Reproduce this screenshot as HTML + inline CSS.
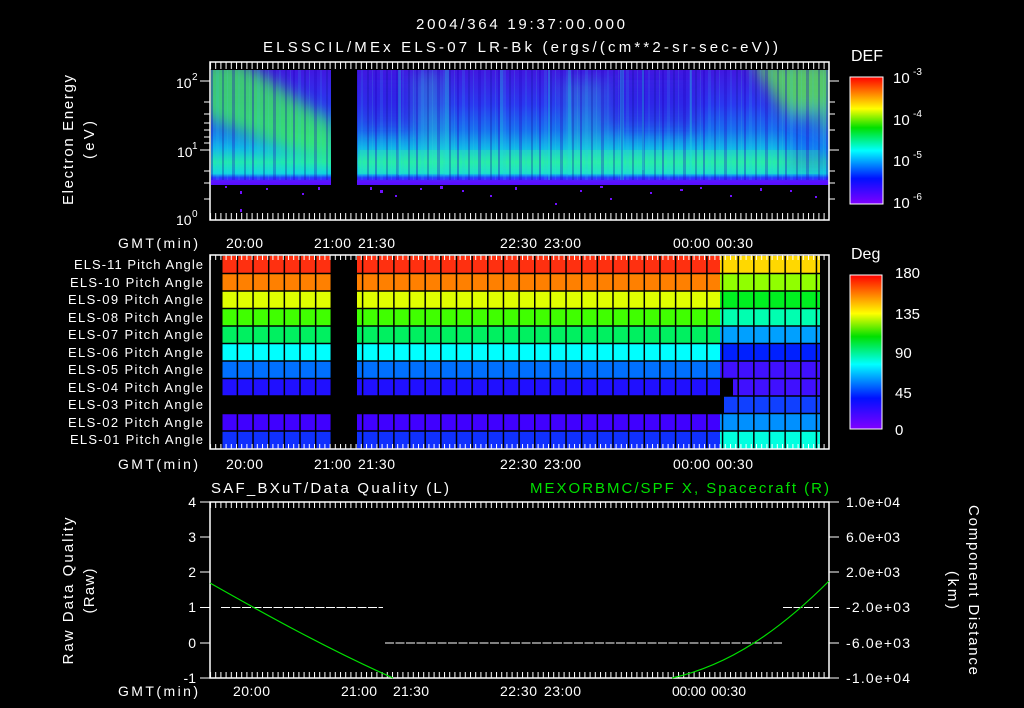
<!DOCTYPE html>
<html><head><meta charset="utf-8"><style>
html,body{margin:0;padding:0;background:#000;}
svg{display:block}
text{font-family:"Liberation Sans",sans-serif;fill:#fff}
</style></head><body>
<svg width="1024" height="708" viewBox="0 0 1024 708" xmlns="http://www.w3.org/2000/svg">
<defs>
<linearGradient id="rb" x1="0" y1="1" x2="0" y2="0">
<stop offset="0" stop-color="#8000ff"/><stop offset="0.2" stop-color="#0010ff"/><stop offset="0.42" stop-color="#00ffff"/><stop offset="0.6" stop-color="#00e000"/><stop offset="0.75" stop-color="#ffff00"/><stop offset="1" stop-color="#ff0000"/>
</linearGradient>
<linearGradient id="spec" x1="0" y1="70" x2="0" y2="185" gradientUnits="userSpaceOnUse">
<stop offset="0" stop-color="#4018e0"/><stop offset="0.3" stop-color="#2a38f0"/><stop offset="0.52" stop-color="#1870f0"/><stop offset="0.68" stop-color="#10b8e8"/><stop offset="0.8" stop-color="#20e8b0"/><stop offset="0.9" stop-color="#10d8e0"/><stop offset="0.935" stop-color="#2040ff"/><stop offset="0.97" stop-color="#6010ff"/><stop offset="1" stop-color="#5010ff"/>
</linearGradient>
<filter id="bl" x="-20%" y="-20%" width="140%" height="140%"><feGaussianBlur stdDeviation="8"/></filter>
<pattern id="str" x="211" y="0" width="41" height="200" patternUnits="userSpaceOnUse">
<rect x="0" y="0" width="2" height="200" fill="#2000c0" opacity="0.35"/>
<rect x="5" y="0" width="3" height="200" fill="#30c0f0" opacity="0.15"/>
<rect x="11" y="0" width="2" height="200" fill="#1010a0" opacity="0.3"/>
<rect x="16" y="0" width="1" height="200" fill="#40d0e0" opacity="0.15"/>
<rect x="21" y="0" width="3" height="200" fill="#2000c0" opacity="0.3"/>
<rect x="27" y="0" width="2" height="200" fill="#30c0f0" opacity="0.12"/>
<rect x="33" y="0" width="2" height="200" fill="#1010a0" opacity="0.3"/>
<rect x="38" y="0" width="1" height="200" fill="#50d0d0" opacity="0.15"/>
</pattern>
<pattern id="grid" x="221" y="0" width="15.65" height="708" patternUnits="userSpaceOnUse">
<rect x="0" y="0" width="1.5" height="708" fill="#000"/>
</pattern>
<pattern id="tk" x="210" y="0" width="5.2" height="10" patternUnits="userSpaceOnUse">
<rect x="0" y="0" width="1" height="10" fill="#fff"/>
</pattern>
<clipPath id="tc"><rect x="211" y="70" width="618" height="115"/></clipPath>
</defs>

<!-- titles -->
<text x="416" y="29" font-size="15" textLength="209">2004/364 19:37:00.000</text>
<text x="263" y="52" font-size="15" textLength="515">ELSSCIL/MEx ELS-07 LR-Bk  (ergs/(cm**2-sr-sec-eV))</text>

<!-- TOP PANEL -->
<g clip-path="url(#tc)">
<rect x="211" y="70" width="618" height="115" fill="url(#spec)"/>
<g filter="url(#bl)" opacity="0.75">
<polygon points="200,60 240,60 335,125 335,160 290,150 200,115" fill="#40ff50"/>
<polygon points="750,60 840,60 840,135 790,120" fill="#60ff40"/>
<polygon points="420,70 440,70 450,170 425,170" fill="#30f0c0" opacity="0.4"/>
<polygon points="560,80 600,80 610,170 570,170" fill="#30f0c0" opacity="0.3"/>
<polygon points="790,110 829,110 829,170 790,170" fill="#1030ff" opacity="0.6"/>
<polygon points="360,80 420,80 420,130 360,130" fill="#3010e0" opacity="0.6"/>
<polygon points="600,80 700,80 700,130 600,130" fill="#3010e0" opacity="0.6"/>
</g>
<rect x="360" y="150" width="460" height="24" fill="#40ff90" opacity="0.25"/>
<rect x="211" y="70" width="618" height="110" fill="url(#str)"/>
<g fill="#20e0e0" opacity="0.3">
<rect x="398" y="70" width="3" height="105"/><rect x="445" y="70" width="4" height="105"/>
<rect x="500" y="70" width="3" height="100"/><rect x="548" y="70" width="2" height="110"/><rect x="568" y="70" width="3" height="105"/>
<rect x="620" y="70" width="4" height="110"/><rect x="642" y="70" width="2" height="100"/><rect x="690" y="70" width="2" height="100"/>
</g>
</g>
<rect x="331" y="66" width="26" height="152" fill="#000"/>
<g fill="#7010ff">
<rect x="225" y="186" width="2" height="2"/><rect x="240" y="191" width="2" height="3"/><rect x="266" y="188" width="2" height="2"/><rect x="302" y="193" width="2" height="2"/><rect x="318" y="187" width="2" height="3"/><rect x="240" y="209" width="2" height="3"/>
<rect x="370" y="187" width="2" height="3"/><rect x="395" y="195" width="2" height="2"/><rect x="420" y="188" width="2" height="2"/><rect x="462" y="190" width="2" height="2"/><rect x="490" y="195" width="2" height="2"/>
<rect x="515" y="187" width="2" height="3"/><rect x="555" y="203" width="2" height="2"/><rect x="580" y="190" width="2" height="2"/><rect x="610" y="198" width="2" height="2"/><rect x="650" y="192" width="2" height="2"/>
<rect x="700" y="187" width="2" height="2"/><rect x="730" y="195" width="2" height="2"/><rect x="760" y="188" width="2" height="3"/><rect x="790" y="190" width="2" height="2"/><rect x="815" y="196" width="2" height="2"/>
<rect x="380" y="190" width="3" height="3"/><rect x="440" y="186" width="3" height="3"/><rect x="600" y="186" width="3" height="2"/><rect x="680" y="189" width="3" height="2"/>
</g>
<rect x="210" y="62" width="619" height="158" fill="none" stroke="#fff" stroke-width="1.5"/>
<rect x="210" y="62" width="619" height="7" fill="url(#tk)"/>
<rect x="210" y="213" width="619" height="7" fill="url(#tk)"/>
<g stroke="#fff" stroke-width="1">
<line x1="200" y1="81" x2="210" y2="81"/><line x1="200" y1="150" x2="210" y2="150"/>
<line x1="204" y1="102" x2="210" y2="102"/><line x1="204" y1="114" x2="210" y2="114"/><line x1="204" y1="123" x2="210" y2="123"/><line x1="204" y1="130" x2="210" y2="130"/><line x1="204" y1="137" x2="210" y2="137"/><line x1="204" y1="143" x2="210" y2="143"/>
<line x1="204" y1="171" x2="210" y2="171"/><line x1="204" y1="183" x2="210" y2="183"/><line x1="204" y1="199" x2="210" y2="199"/>
<line x1="829" y1="81" x2="839" y2="81"/><line x1="829" y1="150" x2="839" y2="150"/>
<line x1="829" y1="102" x2="835" y2="102"/><line x1="829" y1="114" x2="835" y2="114"/><line x1="829" y1="130" x2="835" y2="130"/><line x1="829" y1="171" x2="835" y2="171"/><line x1="829" y1="183" x2="835" y2="183"/><line x1="829" y1="199" x2="835" y2="199"/>
</g>
<text x="176" y="88" font-size="14">10</text><text x="192" y="80" font-size="10">2</text>
<text x="177" y="157" font-size="14">10</text><text x="192" y="149" font-size="10">1</text>
<text x="176" y="225" font-size="14">10</text><text x="192" y="217" font-size="10">0</text>
<text transform="translate(73,140) rotate(-90)" font-size="15" text-anchor="middle" textLength="130">Electron Energy</text>
<text transform="translate(94,140) rotate(-90)" font-size="15" text-anchor="middle" textLength="38">(eV)</text>

<!-- time labels -->
<g font-size="14">
<text x="118" y="248" textLength="80">GMT(min)</text>
<text x="226" y="248" textLength="37">20:00</text><text x="314" y="248" textLength="37">21:00</text><text x="358" y="248" textLength="37">21:30</text><text x="500" y="248" textLength="37">22:30</text><text x="544" y="248" textLength="37">23:00</text><text x="673" y="248" textLength="37">00:00</text><text x="716" y="248" textLength="37">00:30</text>
<text x="118" y="469" textLength="80">GMT(min)</text>
<text x="226" y="469" textLength="37">20:00</text><text x="314" y="469" textLength="37">21:00</text><text x="358" y="469" textLength="37">21:30</text><text x="500" y="469" textLength="37">22:30</text><text x="544" y="469" textLength="37">23:00</text><text x="673" y="469" textLength="37">00:00</text><text x="716" y="469" textLength="37">00:30</text>
<text x="118" y="696" textLength="80">GMT(min)</text>
<text x="233" y="696" textLength="37">20:00</text><text x="341" y="696" textLength="36">21:00</text><text x="393" y="696" textLength="36">21:30</text><text x="500" y="696" textLength="37">22:30</text><text x="544" y="696" textLength="37">23:00</text><text x="672" y="696" textLength="34">00:00</text><text x="711" y="696" textLength="35">00:30</text>
</g>

<!-- DEF colorbar -->
<text x="851" y="61" font-size="16">DEF</text>
<rect x="850" y="77" width="33" height="127" fill="url(#rb)" stroke="#fff" stroke-width="1"/>
<g font-size="15"><text x="893" y="83">10</text><text x="913" y="75" font-size="10">-3</text>
<text x="893" y="125">10</text><text x="913" y="117" font-size="10">-4</text>
<text x="893" y="166">10</text><text x="913" y="158" font-size="10">-5</text>
<text x="893" y="208">10</text><text x="913" y="200" font-size="10">-6</text></g>

<!-- MIDDLE PANEL -->
<g>
<rect x="221" y="256" width="499" height="17.5" fill="#ff3010"/>
<rect x="221" y="273.5" width="499" height="17.5" fill="#ff8000"/>
<rect x="221" y="291" width="499" height="17.5" fill="#e0ff00"/>
<rect x="221" y="308.5" width="499" height="17.5" fill="#40ff00"/>
<rect x="221" y="326" width="499" height="17.5" fill="#00f060"/>
<rect x="221" y="343.5" width="499" height="17.5" fill="#00ffff"/>
<rect x="221" y="361" width="499" height="17.5" fill="#0070ff"/>
<rect x="221" y="378.5" width="499" height="17.5" fill="#2010ff"/>
<rect x="221" y="413.5" width="499" height="17.5" fill="#4000ff"/>
<rect x="221" y="431" width="499" height="17.5" fill="#1030ff"/>
<rect x="720" y="256" width="100" height="17.5" fill="#ffd800"/>
<rect x="720" y="273.5" width="100" height="17.5" fill="#90ff00"/>
<rect x="720" y="291" width="100" height="17.5" fill="#00f020"/>
<rect x="720" y="308.5" width="100" height="17.5" fill="#00ffb0"/>
<rect x="720" y="326" width="100" height="17.5" fill="#00a0ff"/>
<rect x="720" y="343.5" width="100" height="17.5" fill="#0020ff"/>
<rect x="720" y="361" width="100" height="17.5" fill="#4010ff"/>
<rect x="733" y="378.5" width="87" height="17.5" fill="#4010ff"/>
<rect x="724" y="396" width="96" height="17.5" fill="#1040ff"/>
<rect x="720" y="413.5" width="100" height="17.5" fill="#0090ff"/>
<rect x="720" y="431" width="100" height="17.5" fill="#00ffe0"/>
<rect x="221" y="256" width="599" height="193" fill="url(#grid)"/>
<g stroke="#000" stroke-width="1.5">
<line x1="221" y1="273.5" x2="820" y2="273.5"/><line x1="221" y1="291" x2="820" y2="291"/><line x1="221" y1="308.5" x2="820" y2="308.5"/><line x1="221" y1="326" x2="820" y2="326"/><line x1="221" y1="343.5" x2="820" y2="343.5"/><line x1="221" y1="361" x2="820" y2="361"/><line x1="221" y1="378.5" x2="820" y2="378.5"/><line x1="221" y1="396" x2="820" y2="396"/><line x1="221" y1="413.5" x2="820" y2="413.5"/><line x1="221" y1="431" x2="820" y2="431"/>
</g>
<rect x="331" y="256" width="26" height="193" fill="#000"/>
</g>
<rect x="210" y="255" width="619" height="194" fill="none" stroke="#fff" stroke-width="1.5"/>
<rect x="210" y="255" width="619" height="5" fill="url(#tk)"/>
<rect x="210" y="444" width="619" height="5" fill="url(#tk)"/>
<g font-size="13">
<text x="74" y="269" textLength="129">ELS-11 Pitch Angle</text><text x="70" y="287" textLength="133">ELS-10 Pitch Angle</text><text x="68" y="304" textLength="135">ELS-09 Pitch Angle</text><text x="68" y="322" textLength="135">ELS-08 Pitch Angle</text><text x="68" y="339" textLength="135">ELS-07 Pitch Angle</text><text x="68" y="357" textLength="135">ELS-06 Pitch Angle</text><text x="68" y="374" textLength="135">ELS-05 Pitch Angle</text><text x="68" y="392" textLength="135">ELS-04 Pitch Angle</text><text x="68" y="409" textLength="135">ELS-03 Pitch Angle</text><text x="68" y="427" textLength="135">ELS-02 Pitch Angle</text><text x="70" y="444" textLength="133">ELS-01 Pitch Angle</text>
</g>
<text x="851" y="259" font-size="16">Deg</text>
<rect x="850" y="275" width="32" height="154" fill="url(#rb)" stroke="#fff" stroke-width="1"/>
<g font-size="15"><text x="895" y="278">180</text><text x="895" y="319">135</text><text x="895" y="358">90</text><text x="895" y="398">45</text><text x="895" y="435">0</text></g>

<!-- BOTTOM PANEL -->
<text x="211" y="493" font-size="15" textLength="238">SAF_BXuT/Data Quality (L)</text>
<text x="530" y="493" font-size="15" textLength="299" style="fill:#00e000">MEXORBMC/SPF X, Spacecraft (R)</text>
<rect x="210" y="502" width="619" height="176" fill="none" stroke="#fff" stroke-width="1.5"/>
<rect x="210" y="502" width="619" height="6" fill="url(#tk)"/>
<rect x="210" y="672" width="619" height="6" fill="url(#tk)"/>
<line x1="221" y1="607.5" x2="383" y2="607.5" stroke="#fff" stroke-dasharray="9,1.5"/>
<line x1="385" y1="643" x2="782" y2="643" stroke="#fff" stroke-dasharray="9,1.5"/>
<line x1="783" y1="607.5" x2="819" y2="607.5" stroke="#fff" stroke-dasharray="9,1.5"/>
<path d="M210,583 C270,617 330,650 393,678" fill="none" stroke="#00e000" stroke-width="1.2"/>
<path d="M672,678 C730,665 780,630 829,581" fill="none" stroke="#00e000" stroke-width="1.2"/>
<g stroke="#fff"><line x1="200" y1="502" x2="210" y2="502"/><line x1="200" y1="537" x2="210" y2="537"/><line x1="200" y1="572" x2="210" y2="572"/><line x1="200" y1="607.5" x2="210" y2="607.5"/><line x1="200" y1="643" x2="210" y2="643"/><line x1="200" y1="678" x2="210" y2="678"/>
<line x1="829" y1="502" x2="839" y2="502"/><line x1="829" y1="537" x2="839" y2="537"/><line x1="829" y1="572" x2="839" y2="572"/><line x1="829" y1="607.5" x2="839" y2="607.5"/><line x1="829" y1="643" x2="839" y2="643"/><line x1="829" y1="678" x2="839" y2="678"/></g>
<g font-size="14" text-anchor="end"><text x="196" y="507">4</text><text x="196" y="542">3</text><text x="196" y="577">2</text><text x="196" y="612">1</text><text x="196" y="648">0</text><text x="196" y="683">-1</text></g>
<g font-size="14"><text x="846" y="507" textLength="54">1.0e+04</text><text x="846" y="542" textLength="54">6.0e+03</text><text x="846" y="577" textLength="54">2.0e+03</text><text x="846" y="612" textLength="64">-2.0e+03</text><text x="846" y="648" textLength="64">-6.0e+03</text><text x="846" y="683" textLength="64">-1.0e+04</text></g>
<text transform="translate(73,591) rotate(-90)" font-size="15" text-anchor="middle" textLength="147">Raw Data Quality</text>
<text transform="translate(94,591) rotate(-90)" font-size="15" text-anchor="middle" textLength="45">(Raw)</text>
<text transform="translate(969,590) rotate(90)" font-size="15" text-anchor="middle" textLength="170">Component Distance</text>
<text transform="translate(948,590) rotate(90)" font-size="15" text-anchor="middle" textLength="38">(km)</text>
</svg>
</body></html>
